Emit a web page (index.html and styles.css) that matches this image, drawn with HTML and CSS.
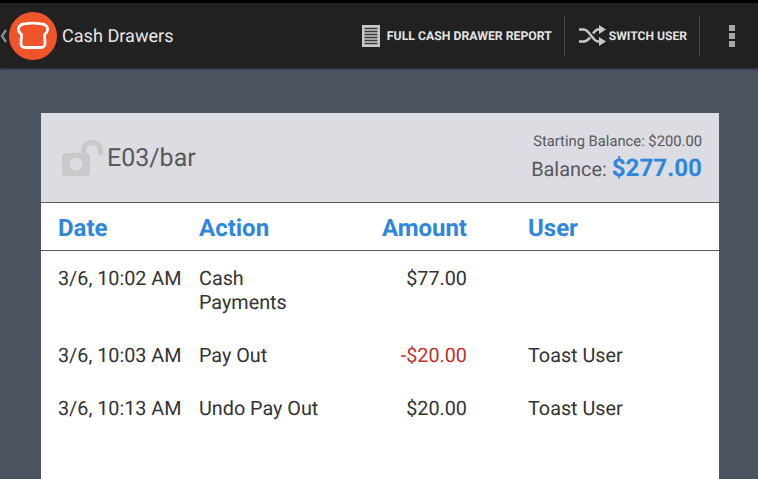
FILE: index.html
```html
<!DOCTYPE html>
<html lang="en">
<head>
<meta charset="utf-8">
<title>Cash Drawers</title>
<link rel="stylesheet" href="styles.css">
</head>
<body>
<div class="status"></div>
<header class="bar">
  <div class="home">
    <svg class="chev" width="9" height="14" viewBox="0 0 9 14"><path d="M6 1L2 7L6 13" fill="none" stroke="#8c8c8c" stroke-width="2.400"/></svg>
    <svg class="logo" width="48" height="48" viewBox="0 0 48 48"><circle cx="24" cy="24" r="24" fill="#f0542a"/><path d="M15 12C20 11 28 11 33 12C37 12.500 39 15 38.500 18C38.200 20 37 21.500 35.500 22.500L36 31C36.200 34 34.500 35.500 32 35.500L16 35.500C13.500 35.500 11.800 34 12 31L12.500 22.500C11 21.500 9.800 20 9.500 18C9 15 11 12.500 15 12Z" fill="none" stroke="#fff" stroke-width="2.800" stroke-linejoin="round"/></svg>
    <span class="title">Cash Drawers</span>
  </div>
  <div class="actions">
    <div class="action report">
      <svg width="18" height="22" viewBox="0 0 18 22"><rect width="18" height="22" fill="#c8c8c8"/><path d="M2.500 3.500H15.500M2.500 6.500H15.500M2.500 9.500H15.500M2.500 12.500H15.500M2.500 15.500H15.500M2.500 18.500H15.500" stroke="#3a3a3a" stroke-width="1.300"/></svg>
      <span>FULL CASH DRAWER REPORT</span>
    </div>
    <div class="action switch">
      <svg width="27" height="21" viewBox="0 0 27 21"><path d="M0 4.500H5C10 4.500 14 16.500 19 16.500H22M0 16.500H5C7.500 16.500 9.500 14.500 11 12.500M14 8.500C15.500 6.500 17 4.500 19 4.500H22" fill="none" stroke="#c8c8c8" stroke-width="2.400"/><path d="M20 0L27 4.500L20 9ZM20 12L27 16.500L20 21Z" fill="#c8c8c8"/></svg>
      <span>SWITCH USER</span>
    </div>
    <div class="overflow"><i></i><i></i><i></i></div>
  </div>
</header>
<main class="page">
  <section class="card">
    <div class="card-head">
      <div class="drawer">
        <svg width="41" height="36" viewBox="0 0 41 36"><path d="M21.500 14V11C21.500 5.500 25 2.500 30 2.500C35 2.500 38.500 5.500 38.500 11V13" fill="none" stroke="#c9c9cb" stroke-width="5" stroke-linecap="round"/><path fill-rule="evenodd" fill="#c9c9cb" d="M3 13H25C26.500 13 28 14.500 28 16V33C28 34.500 26.500 36 25 36H3C1.500 36 0 34.500 0 33V16C0 14.500 1.500 13 3 13ZM14 17.500A6.500 6.500 0 1 0 14 30.500A6.500 6.500 0 1 0 14 17.500Z"/></svg>
        <span>E03/bar</span>
      </div>
      <div class="balances">
        <div class="start">Starting Balance: $200.00</div>
        <div class="balance">Balance: <b>$277.00</b></div>
      </div>
    </div>
    <div class="row heading"><span>Date</span><span>Action</span><span class="num">Amount</span><span>User</span></div>
    <div class="rows">
      <div class="row"><span>3/6, 10:02 AM</span><span>Cash<br>Payments</span><span class="num">$77.00</span><span></span></div>
      <div class="row"><span>3/6, 10:03 AM</span><span>Pay Out</span><span class="num neg">-$20.00</span><span>Toast User</span></div>
      <div class="row"><span>3/6, 10:13 AM</span><span>Undo Pay Out</span><span class="num">$20.00</span><span>Toast User</span></div>
    </div>
  </section>
</main>
</body>
</html>
```
FILE: styles.css
```css
* { box-sizing: border-box; }
html, body { margin: 0; height: 100%; overflow: hidden; }
body { font-family: Roboto, sans-serif; background: #4b5260; display: flex; flex-direction: column; text-rendering: geometricPrecision; }
.status { height: 3px; background: #000; flex: none; }
.bar { height: 65px; flex: none; background: #212121; display: flex; justify-content: space-between; align-items: center; box-shadow: 0 1px 2px rgba(0,0,0,.5); }
.home { display: flex; align-items: center; }
.chev { display: block; width: 9px; flex: none; }
.logo { display: block; margin-right: 5px; flex: none; }
.title { color: #e8e8e8; font-size: 18.100px; padding-top: 2px; }
.actions { display: flex; align-items: center; height: 41px; }
.action { display: flex; align-items: center; height: 41px; color: #e4e4e4; font-size: 12.250px; font-weight: 700; }
.report { gap: 7px; padding-right: 12px; border-right: 1px solid #444; }
.switch { gap: 3px; padding: 0 12px 0 14px; border-right: 1px solid #444; font-size: 12.100px; }
.overflow { width: 58px; padding-left: 6px; display: flex; flex-direction: column; gap: 2px; align-items: center; }
.overflow i { width: 6px; height: 6px; background: #a8a8a8; display: block; }
.page { flex: 1; padding: 45px 39px 0 41px; min-height: 0; overflow: hidden; }
.card { background: #fff; height: 366px; }
.card-head { height: 90px; background: #dcdde2; border-bottom: 1px solid #5c5c60; display: flex; justify-content: space-between; align-items: center; padding: 0 17px 0 21px; }
.drawer { display: flex; align-items: center; gap: 4px; font-size: 25px; color: #58585c; padding-top: 1px; }
.drawer span { padding-top: 1px; }
.balances { text-align: right; color: #58585c; padding-top: 2px; }
.start { font-size: 14.750px; line-height: 16px; }
.balance { font-size: 19.900px; line-height: 30px; margin-top: 4px; }
.balance b { color: #2e86de; font-size: 24.200px; font-weight: 700; }
.row { display: grid; grid-template-columns: 141px 141px 127px 1fr; padding-left: 17px; font-size: 19.800px; line-height: 24px; color: #333; }
.row > span:last-child { padding-left: 61px; }
.num { text-align: right; }
.neg { color: #c0312f; }
.heading { height: 48px; padding-top: 2px; align-items: center; border-bottom: 1px solid #5c5c60; font-size: 24px; font-weight: 700; color: #2e86de; }
.rows { display: flex; flex-direction: column; padding-top: 16px; gap: 29px; }
```
